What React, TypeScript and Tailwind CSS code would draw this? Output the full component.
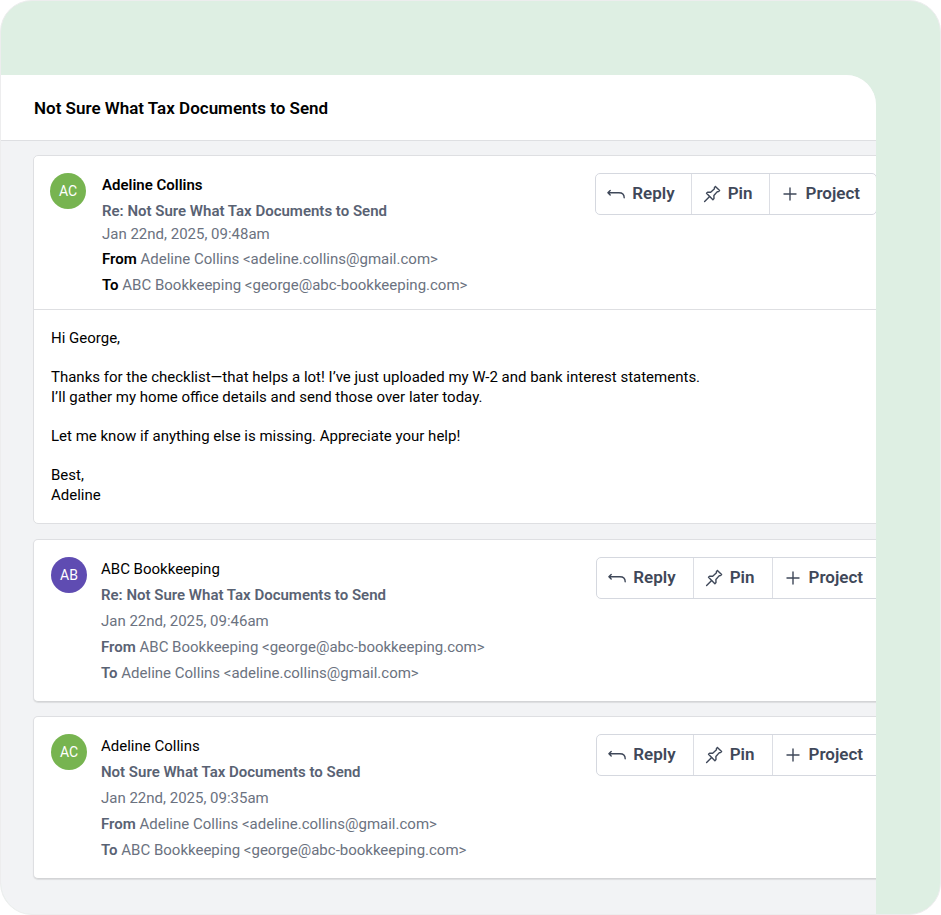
import type { ReactNode } from "react";

type Message = {
  id: string;
  name: string;
  initials: string;
  avatar: string;
  subject: string;
  date: string;
  from: string;
  to: string;
  body?: string[][];
};

const ADELINE = "Adeline Collins <adeline.collins@gmail.com>";
const ABC = "ABC Bookkeeping <george@abc-bookkeeping.com>";

const messages: Message[] = [
  {
    id: "m3",
    name: "Adeline Collins",
    initials: "AC",
    avatar: "bg-[#77b450]",
    subject: "Re: Not Sure What Tax Documents to Send",
    date: "Jan 22nd, 2025, 09:48am",
    from: ADELINE,
    to: ABC,
    body: [
      ["Hi George,"],
      [
        "Thanks for the checklist—that helps a lot! I’ve just uploaded my W-2 and bank interest statements.",
        "I’ll gather my home office details and send those over later today.",
      ],
      ["Let me know if anything else is missing. Appreciate your help!"],
      ["Best,", "Adeline"],
    ],
  },
  {
    id: "m2",
    name: "ABC Bookkeeping",
    initials: "AB",
    avatar: "bg-[#5f4cb2]",
    subject: "Re: Not Sure What Tax Documents to Send",
    date: "Jan 22nd, 2025, 09:46am",
    from: ABC,
    to: ADELINE,
  },
  {
    id: "m1",
    name: "Adeline Collins",
    initials: "AC",
    avatar: "bg-[#77b450]",
    subject: "Not Sure What Tax Documents to Send",
    date: "Jan 22nd, 2025, 09:35am",
    from: ADELINE,
    to: ABC,
  },
];

function Icon({ children }: { children: ReactNode }) {
  return (
    <svg
      className="size-5 shrink-0"
      viewBox="0 0 20 20"
      fill="none"
      stroke="currentColor"
      strokeWidth="1.4"
      strokeLinecap="round"
      strokeLinejoin="round"
      aria-hidden="true"
    >
      {children}
    </svg>
  );
}

const replyIcon = (
  <Icon>
    <path d="M4.2 6.4 1.9 8.7l2.3 2.3M1.9 8.7h11c3.3 0 5.3 1.8 5.3 5" />
  </Icon>
);

const pinIcon = (
  <Icon>
    <path d="M13.4 2.4l4.2 4.2-1.5 1.1-.8-.1-3.4 3.9.1 3.1-1.1 1.1-6.4-6.4 1.1-1.1 3.1.1 3.8-3.5-.2-.9z" />
    <path d="M7.6 12.4 2.6 17.4" />
  </Icon>
);

const plusIcon = (
  <Icon>
    <path d="M10 4v12M4 10h12" />
  </Icon>
);

function Actions({ wide }: { wide: boolean }) {
  const button = `flex h-10 items-center gap-1.5 pl-2.5 ${wide ? "pr-[17px]" : "pr-4"}`;
  return (
    <div className="mt-px flex shrink-0 self-start divide-x divide-[#dcdee4] rounded-[5px] border border-[#d5d8df] text-[17px] font-semibold text-[#3f4859]">
      <button type="button" className={button}>
        {replyIcon}
        Reply
      </button>
      <button type="button" className={button}>
        {pinIcon}
        Pin
      </button>
      <button type="button" className={button}>
        {plusIcon}
        Project
      </button>
    </div>
  );
}

function MessageCard({ message }: { message: Message }) {
  const open = Boolean(message.body);
  return (
    <article
      className={`rounded-[5px] border bg-white ${
        open ? "border-[#dedfe2]" : "border-[#dedfe2] border-b-[#d3d4d6] shadow-[0_1px_1px_#dcdddf]"
      }`}
    >
      <header className={`flex pt-4 ${open ? "gap-4 pb-[11px] pl-4 pr-4" : "gap-[14px] pb-[15px] pl-[17px] pr-3"}`}>
        <div
          className={`mt-px flex size-9 shrink-0 items-center justify-center rounded-full text-sm text-white ${message.avatar}`}
        >
          {message.initials}
        </div>
        <div className="min-w-0 grow text-[15px] leading-[26px] text-[#6b7280]">
          <h2 className={`text-black ${open ? "font-semibold" : "font-normal"}`}>{message.name}</h2>
          <p className="font-semibold text-[#596273]">{message.subject}</p>
          <p className={open ? "mb-0.5 leading-5" : ""}>{message.date}</p>
          <p>
            <b className={`font-semibold ${open ? "text-black" : "text-[#596273]"}`}>From</b> {message.from}
          </p>
          <p>
            <b className={`font-semibold ${open ? "text-black" : "text-[#596273]"}`}>To</b> {message.to}
          </p>
        </div>
        <Actions wide={!open} />
      </header>
      {message.body && (
        <div className="flex flex-col gap-[19px] border-t border-[#dedfe2] px-[17px] py-[18px] text-[15px] leading-5 text-black">
          {message.body.map((lines) => (
            <p key={lines[0]}>
              {lines.map((line) => (
                <span key={line} className="block">
                  {line}
                </span>
              ))}
            </p>
          ))}
        </div>
      )}
    </article>
  );
}

export default function App() {
  return (
    <div className="min-h-screen bg-white font-['Roboto','Liberation_Sans',sans-serif]">
      <div className="flex min-h-screen flex-col overflow-hidden rounded-[32px] border border-[#ededee] bg-[#deefe3] pr-16 pt-[74px]">
        <main className="flex grow flex-col overflow-hidden rounded-tr-[30px] bg-[#f2f3f5]">
          <div className="flex h-[66px] items-center border-b border-[#dedfe2] bg-white px-[33px] pt-0.5">
            <h1 className="text-[17px] font-semibold text-black">Not Sure What Tax Documents to Send</h1>
          </div>
          <div className="-mr-[18px] flex flex-col pb-8 pl-8 pt-[14px]">
            <div className="mb-[15px]">
              <MessageCard message={messages[0]} />
            </div>
            <div className="flex flex-col gap-[14px]">
              {messages.slice(1).map((message) => (
                <MessageCard key={message.id} message={message} />
              ))}
            </div>
          </div>
        </main>
      </div>
    </div>
  );
}
